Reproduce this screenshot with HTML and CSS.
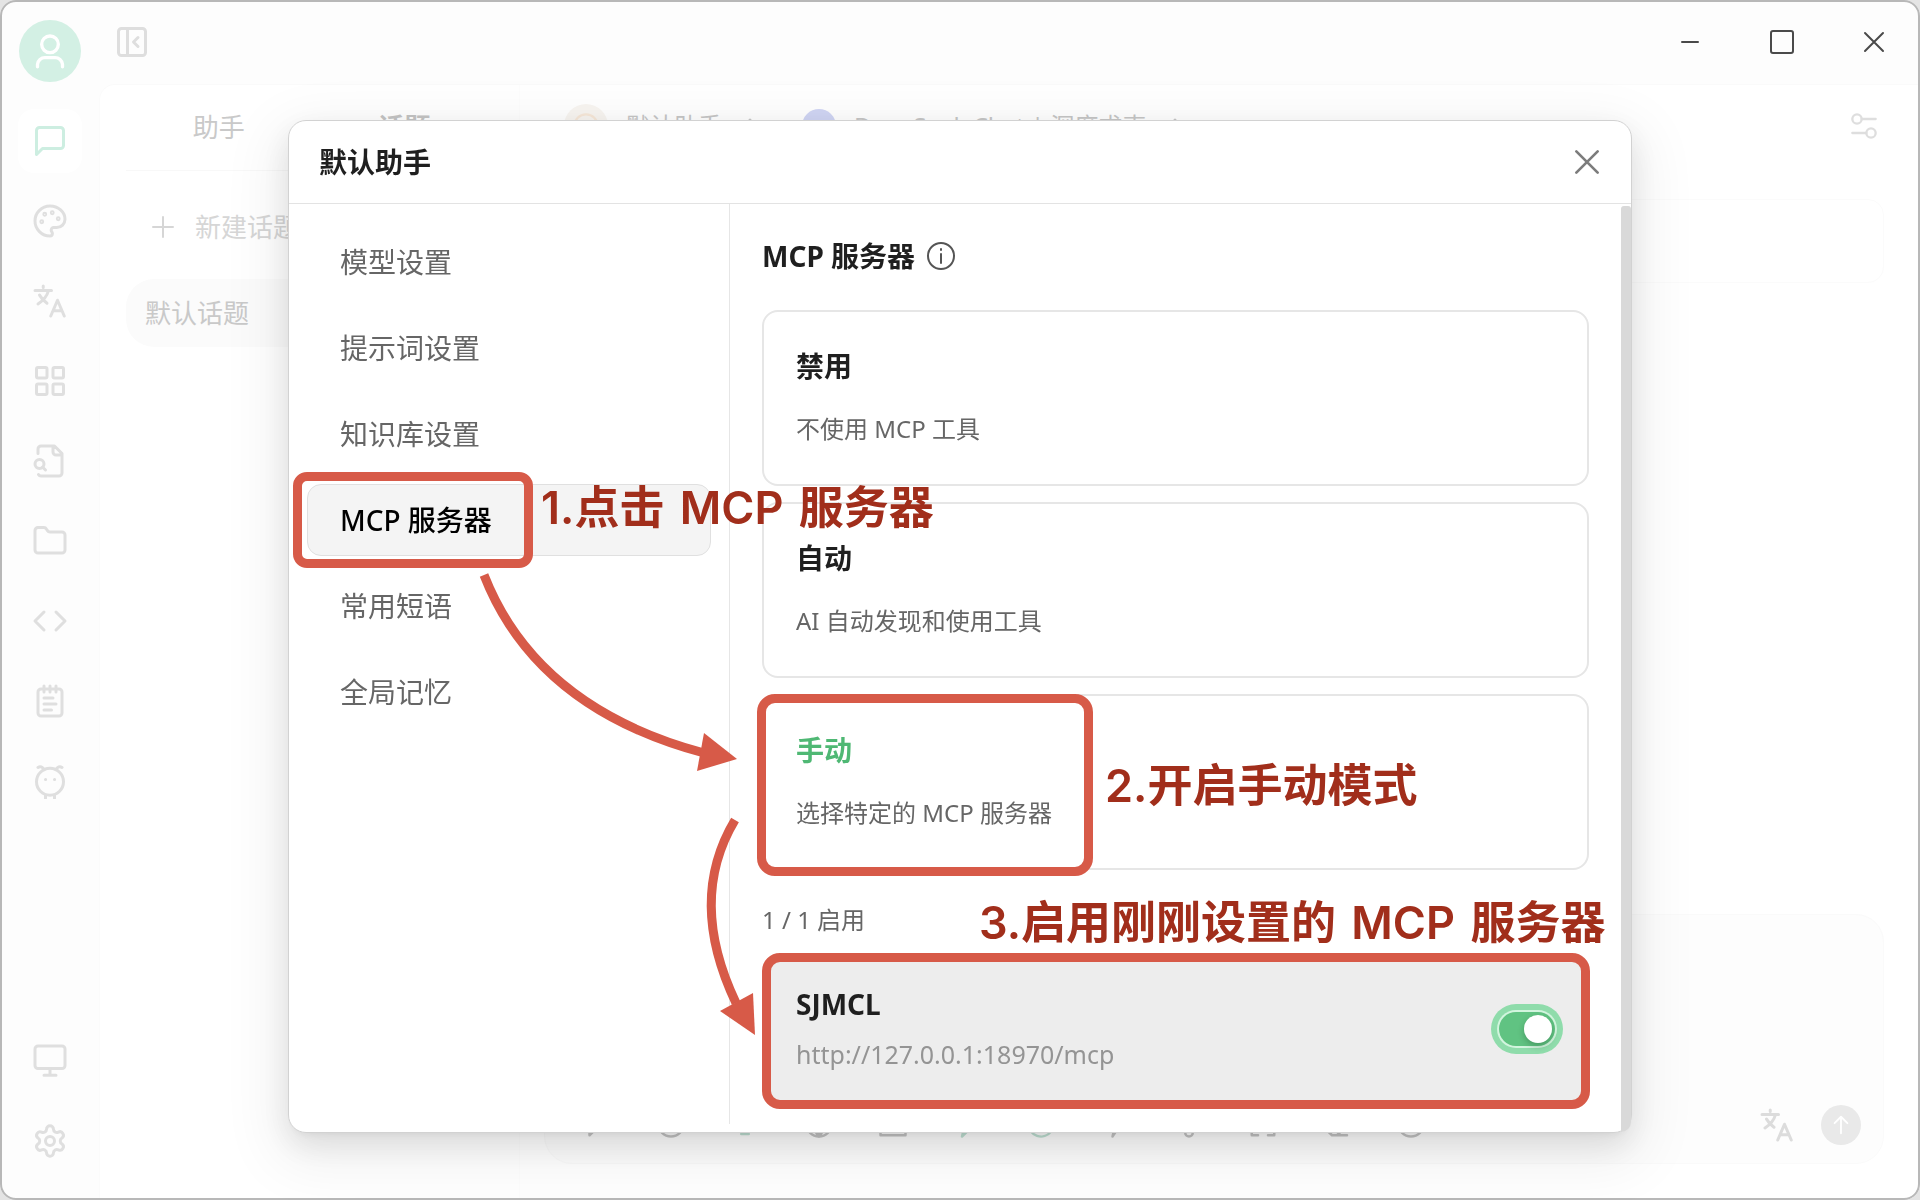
FILE: index.html
```html
<!DOCTYPE html>
<html lang="zh-CN">
<head>
    <meta charset="utf-8">
    <title>默认助手</title>
    <link rel="stylesheet" href="styles.css">
</head>
<body>

<svg class="sprite" aria-hidden="true">
    <symbol id="languages" viewBox="0 0 24 24"><path d="M2 5h11M7.500 2v1M11 5c-1 4-4 7-7 9M5 8c1 2 3 4 5 5.500M12.500 22 17 11.500 21.500 22M14 18.500h6"/></symbol>
    <symbol id="close" viewBox="0 0 24 24"><path d="M4 4l16 16M20 4L4 20"/></symbol>
    <symbol id="updown" viewBox="0 0 24 24"><path d="m7 15 5 5 5-5M7 9l5-5 5 5"/></symbol>
</svg>

<div class="window">
    <nav class="sidebar">
        <span class="avatar">
            <svg viewBox="0 0 24 24"><circle cx="12" cy="8" r="5"/><path d="M4.500 21.500v-1.500a4.500 4.500 0 0 1 4.500-4h6a4.500 4.500 0 0 1 4.500 4v1.500"/></svg>
        </span>
        <button class="nav-item active" aria-label="对话"><svg viewBox="0 0 24 24"><path d="M21 15a2 2 0 0 1-2 2H7l-4 4V5a2 2 0 0 1 2-2h14a2 2 0 0 1 2 2z"/></svg></button>
        <button class="nav-item" aria-label="绘画"><svg viewBox="0 0 24 24"><circle cx="13.500" cy="6.500" r=".6"/><circle cx="17.500" cy="10.500" r=".6"/><circle cx="8.500" cy="7.500" r=".6"/><circle cx="6.500" cy="12.500" r=".6"/><path d="M12 2C6.500 2 2 6.500 2 12s4.500 10 10 10c.9 0 1.600-.7 1.600-1.700 0-.4-.2-.8-.4-1.100-.3-.3-.4-.7-.4-1.100a1.600 1.600 0 0 1 1.700-1.700h2c3 0 5.500-2.500 5.500-5.500C22 6 17.500 2 12 2z"/></svg></button>
        <button class="nav-item" aria-label="翻译"><svg><use href="#languages"/></svg></button>
        <button class="nav-item" aria-label="小程序"><svg viewBox="0 0 24 24"><rect x="3" y="3" width="7" height="7" rx="1"/><rect x="14" y="3" width="7" height="7" rx="1"/><rect x="3" y="14" width="7" height="7" rx="1"/><rect x="14" y="14" width="7" height="7" rx="1"/></svg></button>
        <button class="nav-item" aria-label="知识库"><svg viewBox="0 0 24 24"><path d="M14 2v4a2 2 0 0 0 2 2h4M4 7V4a2 2 0 0 1 2-2h9l5 5v13a2 2 0 0 1-2 2H6a2 2 0 0 1-1.700-1M7 16l2 2"/><circle cx="5" cy="14" r="3"/></svg></button>
        <button class="nav-item" aria-label="文件"><svg viewBox="0 0 24 24"><path d="M20 20a2 2 0 0 0 2-2V8a2 2 0 0 0-2-2h-8a2 2 0 0 1-1.700-.9L9.600 4a2 2 0 0 0-1.700-1H4a2 2 0 0 0-2 2v13a2 2 0 0 0 2 2z"/></svg></button>
        <button class="nav-item" aria-label="代码"><svg viewBox="0 0 24 24"><path d="m16 18 6-6-6-6M8 6l-6 6 6 6"/></svg></button>
        <button class="nav-item" aria-label="笔记"><svg viewBox="0 0 24 24"><path d="M8 2v4M12 2v4M16 2v4M8 10h6M8 14h8M8 18h5"/><rect x="4" y="4" width="16" height="18" rx="2"/></svg></button>
        <button class="nav-item" aria-label="智能体"><svg viewBox="0 0 24 24"><circle cx="12" cy="12.500" r="9"/><path d="M8 4.500C7 2.500 5.500 2 4 3M16 4.500c1-2 2.500-2.500 4-1.500M9 21.500v2M15 21.500v2M9 11h.1M15 11h.1"/></svg></button>
        <button class="nav-item push" aria-label="显示"><svg viewBox="0 0 24 24"><rect x="2" y="2" width="20" height="15" rx="2"/><path d="M8 21.500h8M12 17v4.500"/></svg></button>
        <button class="nav-item" aria-label="设置"><svg viewBox="0 0 24 24"><path d="M9.700 4.100a2.300 2.300 0 0 1 4.600 0 2.300 2.300 0 0 0 3.300 2 2.300 2.300 0 0 1 2.400 3.900 2.300 2.300 0 0 0 0 4 2.300 2.300 0 0 1-2.400 3.900 2.300 2.300 0 0 0-3.300 2 2.300 2.300 0 0 1-4.600 0 2.300 2.300 0 0 0-3.300-2A2.300 2.300 0 0 1 4 14a2.300 2.300 0 0 0 0-4 2.300 2.300 0 0 1 2.400-3.900 2.300 2.300 0 0 0 3.300-2"/><circle cx="12" cy="12" r="3"/></svg></button>
    </nav>

    <div class="main">
        <header class="titlebar">
            <button class="toggle-panel" aria-label="收起"><svg viewBox="0 0 24 24"><rect x="3" y="3" width="18" height="18" rx="2"/><path d="M9 3v18M16 9l-3 3 3 3"/></svg></button>
            <div class="controls">
                <button aria-label="最小化"><svg viewBox="0 0 24 24"><path d="M4 12h16"/></svg></button>
                <button aria-label="最大化"><svg viewBox="0 0 24 24"><rect x="1" y="1" width="22" height="22" rx="2"/></svg></button>
                <button aria-label="关闭"><svg viewBox="0 0 24 24"><path d="M3 3l18 18M21 3L3 21"/></svg></button>
            </div>
        </header>

        <div class="workspace">
            <aside class="topics">
                <div class="tabs">
                    <button>助手</button>
                    <button class="active">话题</button>
                </div>
                <button class="new-topic"><svg viewBox="0 0 24 24"><path d="M12 2v20M2 12h20"/></svg>新建话题</button>
                <button class="topic">默认话题</button>
            </aside>

            <section class="chat">
                <div class="chat-head">
                    <span class="emoji"><svg viewBox="0 0 24 24"><circle cx="12" cy="12" r="10"/><path d="M7 9c1-1 2-1 3 0M14 9c1-1 2-1 3 0"/></svg></span>
                    <span>默认助手</span>
                    <svg class="chevron"><use href="#updown"/></svg>
                    <span class="model"></span>
                    <span>DeepSeek Chat | 深度求索</span>
                    <svg class="chevron"><use href="#updown"/></svg>
                    <button class="chat-options" aria-label="选项"><svg viewBox="0 0 24 24"><circle cx="6" cy="6" r="4"/><path d="M10 6h12M2 18h12"/><circle cx="18" cy="18" r="4"/></svg></button>
                </div>
                <div class="prompt"></div>
                <div class="composer">
                    <div class="tools">
                        <svg viewBox="0 0 24 24"><path d="M6 3v18l6-6h8V3z"/></svg>
                        <svg viewBox="0 0 24 24"><circle cx="12" cy="12" r="10"/><circle cx="12" cy="13" r="5"/></svg>
                        <svg class="on" viewBox="0 0 24 24"><path d="M12 3v9M9 20h6"/></svg>
                        <svg viewBox="0 0 24 24"><circle cx="12" cy="12" r="10"/><path d="M12 2c-5 5-5 15 0 20 5-5 5-15 0-20M12 2v20"/></svg>
                        <svg viewBox="0 0 24 24"><path d="M2 4h20v17H2zM8 16h8"/></svg>
                        <svg class="on" viewBox="0 0 24 24"><path d="M8 22l8-8-6 0z"/></svg>
                        <svg class="on" viewBox="0 0 24 24"><path d="M2 12a10 10 0 0 0 18 6"/></svg>
                        <svg viewBox="0 0 24 24"><path d="M10 22l8-12h-6l2-8-8 12h6z"/></svg>
                        <svg viewBox="0 0 24 24"><path d="M9 4v15a3 3 0 0 0 6 0V4"/></svg>
                        <svg viewBox="0 0 24 24"><path d="M8 3H3v5M16 3h5v5M8 21H3v-5M16 21h5v-5"/></svg>
                        <svg viewBox="0 0 24 24"><path d="M20 21H8l-6-6L13 4l8 8-9 9M7 10l8 8"/></svg>
                        <svg viewBox="0 0 24 24"><circle cx="12" cy="12" r="10"/></svg>
                    </div>
                    <button class="translate" aria-label="翻译"><svg><use href="#languages"/></svg></button>
                    <button class="send" aria-label="发送"><svg viewBox="0 0 24 24"><path d="M12 21V3M5 10l7-7 7 7"/></svg></button>
                </div>
            </section>
        </div>
    </div>
</div>

<div class="modal-wrap">
    <div class="modal" role="dialog" aria-labelledby="modalTitle">
        <header class="modal-head">
            <h2 id="modalTitle">默认助手</h2>
            <button class="modal-close" aria-label="关闭"><svg><use href="#close"/></svg></button>
        </header>
        <div class="modal-body">
            <nav class="menu">
                <button>模型设置</button>
                <button>提示词设置</button>
                <button>知识库设置</button>
                <button class="active">MCP 服务器</button>
                <button>常用短语</button>
                <button>全局记忆</button>
            </nav>
            <section class="panel">
                <h3>MCP 服务器
                    <svg viewBox="0 0 28 28"><circle cx="14" cy="14" r="13"/><path d="M14 12v9M14 7v1"/></svg>
                </h3>
                <div class="modes">
                    <button class="mode"><strong>禁用</strong><span>不使用 MCP 工具</span></button>
                    <button class="mode"><strong>自动</strong><span>AI 自动发现和使用工具</span></button>
                    <button class="mode active"><strong>手动</strong><span>选择特定的 MCP 服务器</span></button>
                </div>
                <p class="count">1 / 1 启用</p>
                <div class="server">
                    <label for="sjmcl"><strong>SJMCL</strong><span>http://127.0.0.1:18970/mcp</span></label>
                    <input class="switch" type="checkbox" role="switch" id="sjmcl" checked>
                </div>
            </section>
            <div class="scrollbar"></div>
        </div>

        <!-- step-by-step notes on top of the dialog -->
        <div class="frame frame-menu"></div>
        <div class="frame frame-mode"></div>
        <div class="frame frame-server"></div>
        <p class="note note-menu">1.点击 <span>MCP</span> 服务器</p>
        <p class="note note-mode">2.开启手动模式</p>
        <p class="note note-server">3.启用刚刚设置的 <span>MCP</span> 服务器</p>
        <svg class="arrows" viewBox="0 0 500 480" aria-hidden="true">
            <path class="line" d="M16 15Q68 148 236 193"/>
            <path d="M236 173l33 26-40 12z"/>
            <path class="line" d="M267 260Q219 340 268 443"/>
            <path d="M285 433l2 42-35-24z"/>
        </svg>
    </div>
</div>

</body>
</html>
```
FILE: styles.css
```css
* {
    box-sizing: border-box;
}

body {
    margin: 0;
    background: #e4e4e4;
    font-family: "Noto Sans", "Noto Sans CJK SC", sans-serif;
    font-size: 28px;
    line-height: 40px;
    color: #1f1f1f;
}

button {
    padding: 0;
    border: none;
    background: none;
    color: inherit;
    font: inherit;
    cursor: pointer;
}

h2, h3, p {
    margin: 0;
}

h2, h3 {
    font-size: 28px;
    font-weight: 700;
}

svg {
    display: block;
    flex: none;
    fill: none;
    stroke: currentColor;
    stroke-width: 2;
    stroke-linecap: round;
    stroke-linejoin: round;
}

.sprite {
    display: none;
}

/* app window */
.window {
    display: flex;
    height: 100vh;
    outline: 2px solid #b8b8b8;
    outline-offset: -2px;
    border-radius: 16px;
    background: #fdfdfd;
    overflow: hidden;
}

.sidebar {
    display: flex;
    flex-direction: column;
    align-items: center;
    gap: 16px;
    width: 99px;
    padding: 20px 0 27px;
    color: #dfdfdf;
}

.avatar {
    display: grid;
    place-items: center;
    width: 62px;
    height: 62px;
    margin-bottom: 11px;
    border-radius: 50%;
    background: #d3f0e4;
    color: #fff;
}

.avatar svg {
    width: 40px;
    height: 40px;
}

.nav-item {
    display: grid;
    place-items: center;
    width: 64px;
    height: 64px;
    border-radius: 16px;
}

.nav-item svg {
    width: 36px;
    height: 36px;
}

.nav-item.active {
    background: #fff;
    color: #cdeee1;
}

.nav-item.push {
    margin-top: auto;
}

.main {
    flex: 1;
    display: flex;
    flex-direction: column;
    min-width: 0;
}

.titlebar {
    display: flex;
    justify-content: space-between;
    align-items: center;
    height: 84px;
    padding-left: 15px;
}

.toggle-panel {
    color: #dedede;
}

.toggle-panel svg {
    width: 36px;
    height: 36px;
}

.controls {
    display: flex;
    color: #4a4a4a;
}

.controls button {
    display: grid;
    place-items: center;
    width: 92px;
    height: 84px;
}

.controls svg {
    width: 24px;
    height: 24px;
}

.workspace {
    flex: 1;
    display: flex;
    border-top: 1px solid #fafafa;
    border-left: 1px solid #fbfbfb;
    border-top-left-radius: 16px;
    background: #fff;
}

.topics {
    width: 420px;
    padding: 0 22px 0 26px;
    border-right: 1px solid #fdfdfd;
    font-size: 26px;
    color: #c9c9c9;
}

.tabs {
    display: flex;
    margin-bottom: 22px;
    padding-bottom: 2px;
    border-bottom: 1px solid #f8f8f8;
}

.tabs button {
    flex: 1;
    height: 83px;
}

.tabs .active {
    font-weight: 700;
    color: #c4c4c4;
}

.new-topic, .topic {
    display: flex;
    align-items: center;
    width: 100%;
    height: 68px;
}

.new-topic {
    gap: 20px;
    padding-left: 25px;
    margin-bottom: 18px;
    color: #d6d6d6;
}

.new-topic svg {
    width: 24px;
    height: 24px;
}

.topic {
    padding-left: 19px;
    border-radius: 28px;
    background: #fbfbfb;
}

.chat {
    flex: 1;
    display: flex;
    flex-direction: column;
    padding: 0 36px 36px 24px;
}

.chat-head {
    display: flex;
    align-items: center;
    gap: 18px;
    height: 82px;
    padding-left: 20px;
    font-size: 24px;
    color: #c6c6c6;
}

.emoji {
    display: grid;
    place-items: center;
    width: 44px;
    height: 44px;
    border-radius: 50%;
    background: #f8f5f1;
    color: #f7e8d8;
}

.emoji svg {
    width: 28px;
    height: 28px;
}

.chevron {
    width: 20px;
    height: 20px;
}

.model {
    width: 34px;
    height: 34px;
    margin-left: 24px;
    border-radius: 50%;
    background: #d0d5f4;
}

.chat-options {
    margin-left: auto;
    margin-right: 6px;
    color: #dedede;
}

.chat-options svg {
    width: 28px;
    height: 28px;
}

.prompt {
    height: 84px;
    margin-top: 32px;
    border: 1px solid #fbfbfb;
    border-radius: 16px;
}

.composer {
    display: flex;
    align-items: flex-end;
    height: 250px;
    margin-top: auto;
    padding: 0 22px 18px 37px;
    border: 1px solid #fafafa;
    border-radius: 28px;
    background: #fdfdfd;
}

.tools {
    flex: 1;
    display: flex;
    gap: 44px;
    padding-bottom: 6px;
    color: #c4c4c4;
}

.tools svg {
    width: 30px;
    height: 30px;
}

.tools .on {
    color: #bfe0d3;
}

.translate {
    margin-right: 26px;
    color: #dcdcdc;
}

.translate svg {
    width: 36px;
    height: 40px;
}

.send {
    display: grid;
    place-items: center;
    width: 40px;
    height: 40px;
    border-radius: 50%;
    background: #e9e9e9;
    color: #fff;
}

.send svg {
    width: 22px;
    height: 22px;
}

/* dialog */
.modal-wrap {
    position: fixed;
    inset: 0;
    display: flex;
    justify-content: center;
    align-items: flex-start;
    padding-top: 120px;
}

.modal {
    position: relative;
    width: 70%;
    border: 1px solid #d2d2d2;
    border-radius: 18px;
    background: #fff;
    box-shadow: 0 12px 32px rgba(0, 0, 0, 0.1), 0 6px 12px -8px rgba(0, 0, 0, 0.12), 0 18px 56px 16px rgba(0, 0, 0, 0.06);
}

.modal-head {
    display: flex;
    justify-content: space-between;
    align-items: center;
    height: 83px;
    padding: 0 28px 0 30px;
    border-bottom: 1px solid #e3e3e3;
}

.modal-close {
    color: #7c7c7c;
}

.modal-close svg {
    width: 32px;
    height: 32px;
}

.modal-body {
    display: flex;
}

.menu {
    display: flex;
    flex-direction: column;
    gap: 14px;
    width: 441px;
    margin-bottom: 8px;
    padding: 22px 18px;
    border-right: 1px solid #e6e6e6;
}

.menu button {
    height: 72px;
    padding-left: 32px;
    border: 1px solid transparent;
    border-radius: 14px;
    color: #666;
    text-align: left;
}

.menu .active {
    border-color: #e0e0e0;
    background: #f4f4f4;
    color: #000;
    font-weight: 500;
}

.panel {
    flex: 1;
    padding: 32px;
}

.panel h3 {
    display: flex;
    align-items: center;
    gap: 12px;
    margin-bottom: 34px;
}

.panel h3 svg {
    width: 28px;
    height: 28px;
    color: #555;
}

.modes {
    display: grid;
    gap: 16px;
}

.mode {
    display: flex;
    flex-direction: column;
    gap: 23px;
    height: 176px;
    padding: 34px 32px;
    border: 2px solid #e6e6e6;
    border-radius: 16px;
    text-align: left;
}

.mode span {
    font-size: 24px;
    color: #666;
}

.mode.active strong {
    color: #4fb874;
}

.count {
    margin: 30px 0 18px;
    font-size: 24px;
    color: #666;
}

.server {
    display: flex;
    justify-content: space-between;
    align-items: center;
    height: 142px;
    padding: 0 34px;
    border-radius: 16px;
    background: #ededed;
}

.server label {
    display: grid;
    gap: 10px;
}

.server span {
    font-size: 25px;
    color: #949494;
}

.switch {
    appearance: none;
    width: 56px;
    height: 34px;
    margin: 0;
    padding: 3px;
    border-radius: 17px;
    background: #60c382;
    box-shadow: 0 0 0 2px #d2f5de, 0 0 0 8px #8fdcab;
}

.switch::before {
    content: "";
    display: block;
    width: 28px;
    height: 28px;
    border-radius: 50%;
    background: #fff;
    box-shadow: 0 3px 6px rgba(0, 35, 11, 0.25);
}

.switch:checked::before {
    margin-left: auto;
}

.scrollbar {
    width: 10px;
    margin-top: 2px;
    border-radius: 5px 5px 17px 0;
    background: #d9d9d9;
}

/* notes */
.frame {
    position: absolute;
    border: 9px solid #d75a48;
    border-radius: 18px;
}

.frame-menu {
    left: 4px;
    top: 351px;
    width: 240px;
    height: 96px;
    border-radius: 14px;
}

.frame-mode {
    left: 468px;
    top: 573px;
    width: 336px;
    height: 182px;
}

.frame-server {
    left: 473px;
    top: 832px;
    width: 828px;
    height: 156px;
}

.note {
    position: absolute;
    font-family: Inter, "Noto Sans CJK SC", sans-serif;
    font-size: 45px;
    font-weight: 600;
    line-height: 60px;
    color: #a12e1b;
    white-space: nowrap;
}

.note span {
    margin: 0 4px;
}

.note-menu {
    left: 252px;
    top: 357px;
}

.note-mode {
    left: 816px;
    top: 635px;
}

.note-server {
    left: 690px;
    top: 772px;
}

.arrows {
    position: absolute;
    left: 179px;
    top: 439px;
    width: 500px;
    height: 480px;
    fill: #d75a48;
    stroke: none;
}

.arrows .line {
    fill: none;
    stroke: #d75a48;
    stroke-width: 9;
    stroke-linecap: butt;
}
```
